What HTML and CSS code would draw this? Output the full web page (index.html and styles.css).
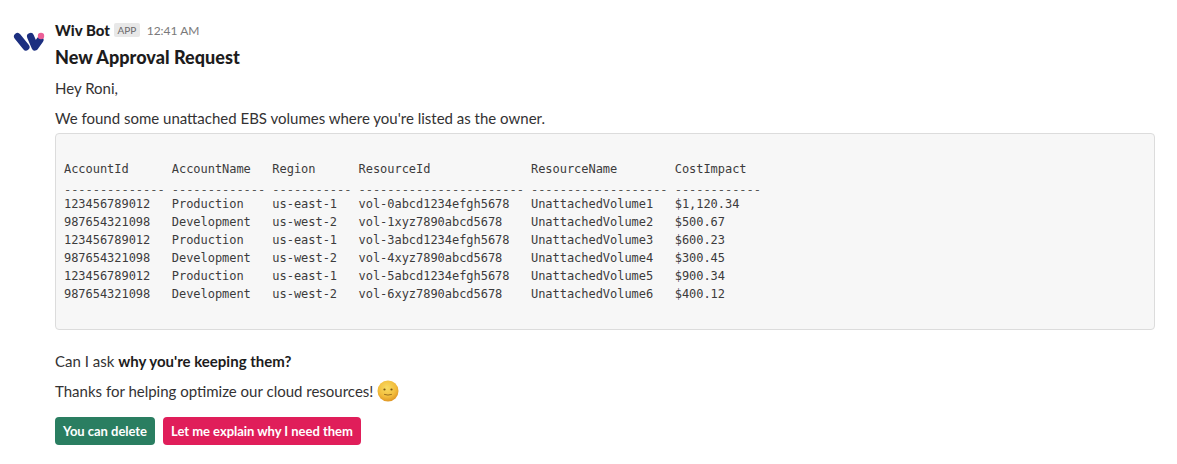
FILE: index.html
```html
<!DOCTYPE html>
<html lang="en">
<head>
<meta charset="utf-8">
<title>Wiv Bot</title>
<link rel="stylesheet" href="styles.css">
</head>
<body>
<div class="message">
  <div class="avatar">
    <svg width="36" height="36" viewBox="0 0 36 36" aria-hidden="true">
      <g fill="none" stroke="#1c2f80" stroke-width="7" stroke-linecap="round" stroke-linejoin="round">
        <path d="M4.500 10.500 L13 21"/>
        <path d="M17.500 10.500 L22 21 L27 14"/>
      </g>
      <circle cx="28" cy="10" r="3.200" fill="#ec5f97"/>
    </svg>
  </div>
  <div class="content">
    <div class="meta">
      <span class="name">Wiv Bot</span>
      <span class="badge">APP</span>
      <span class="time">12:41 AM</span>
    </div>
    <h1 class="title">New Approval Request</h1>
    <p class="line greeting">Hey Roni,</p>
    <p class="line intro">We found some unattached EBS volumes where you're listed as the owner.</p>
    <pre class="code">

AccountId      AccountName   Region      ResourceId              ResourceName        CostImpact<span class="rule">-------------- ------------- ----------- ----------------------- ------------------- ------------</span>123456789012   Production    us-east-1   vol-0abcd1234efgh5678   UnattachedVolume1   $1,120.34
987654321098   Development   us-west-2   vol-1xyz7890abcd5678    UnattachedVolume2   $500.67
123456789012   Production    us-east-1   vol-3abcd1234efgh5678   UnattachedVolume3   $600.23
987654321098   Development   us-west-2   vol-4xyz7890abcd5678    UnattachedVolume4   $300.45
123456789012   Production    us-east-1   vol-5abcd1234efgh5678   UnattachedVolume5   $900.34
987654321098   Development   us-west-2   vol-6xyz7890abcd5678    UnattachedVolume6   $400.12

</pre>
    <p class="line ask">Can I ask <strong>why you're keeping them?</strong></p>
    <p class="line thanks">Thanks for helping optimize our cloud resources!
      <svg class="emoji" width="22" height="22" viewBox="0 0 22 22" aria-hidden="true">
        <defs>
          <radialGradient id="face" cx="45%" cy="35%" r="70%">
            <stop offset="0" stop-color="#f8dc62"/>
            <stop offset="0.6" stop-color="#f2bd3c"/>
            <stop offset="1" stop-color="#dc8f20"/>
          </radialGradient>
        </defs>
        <circle cx="11" cy="11" r="10.500" fill="url(#face)"/>
        <circle cx="7.500" cy="9.500" r="1.100" fill="#7a5514"/>
        <circle cx="14.500" cy="9.500" r="1.100" fill="#7a5514"/>
        <path d="M7.500 14.500 Q11 15.800 14.500 14.500" fill="none" stroke="#9a7020" stroke-width="1" stroke-linecap="round"/>
      </svg>
    </p>
    <div class="actions">
      <button class="btn approve" type="button">You can delete</button>
      <button class="btn deny" type="button">Let me explain why I need them</button>
    </div>
  </div>
</div>
</body>
</html>
```

FILE: styles.css
```css
html, body {
  margin: 0;
  padding: 0;
  background: #fff;
}

body {
  font-family: Lato, "Liberation Sans", sans-serif;
  color: #1d1c1d;
}

.message {
  display: flex;
  gap: 6px;
  padding: 19px 22px 0 13px;
}

.avatar {
  width: 36px;
  height: 36px;
  flex: none;
  padding-top: 7px;
}

.content {
  flex: 1;
  min-width: 0;
}

.meta {
  display: flex;
  align-items: center;
  height: 22px;
}

.name {
  font-size: 15px;
  font-weight: 900;
}

.badge {
  margin-left: 4px;
  padding: 0 3.500px;
  font-size: 10px;
  line-height: 14px;
  color: #6a696a;
  background: #e8e8e8;
  border-radius: 2px;
}

.time {
  margin-left: 7px;
  font-size: 12px;
  color: #7a797a;
}

.title {
  margin: 4px 0 0;
  font-size: 18px;
  line-height: 24px;
  font-weight: 900;
  letter-spacing: 0.05px;
}

.line {
  margin: 0;
  font-size: 15px;
  line-height: 22px;
  color: #333233;
}

.greeting {
  margin-top: 8px;
}

.intro {
  margin-top: 8px;
}

.code {
  margin: 4px 0 0;
  padding: 8px;
  height: 179px;
  box-sizing: content-box;
  overflow: hidden;
  font-family: "DejaVu Sans Mono", monospace;
  font-size: 12px;
  line-height: 18px;
  letter-spacing: -0.04px;
  color: #3c3b3c;
  background: #f7f7f7;
  border: 1px solid #dcdcdc;
  border-radius: 4px;
}

.rule {
  display: block;
  height: 17px;
  line-height: 24px;
  color: #555;
}

.ask {
  margin-top: 20px;
}

.ask strong {
  color: #1d1c1d;
}

.thanks {
  margin-top: 7px;
  display: flex;
  align-items: center;
  gap: 4px;
  height: 24px;
}

.emoji {
  flex: none;
}

.actions {
  display: flex;
  gap: 8px;
  margin-top: 14px;
}

.btn {
  height: 28px;
  padding: 0 8px;
  border: 0;
  border-radius: 4px;
  font-family: Lato, "Liberation Sans", sans-serif;
  font-size: 13px;
  font-weight: 700;
  letter-spacing: -0.03px;
  color: #fff;
}

.approve {
  background: #2a7e61;
}

.deny {
  background: #e01e5a;
}
```
